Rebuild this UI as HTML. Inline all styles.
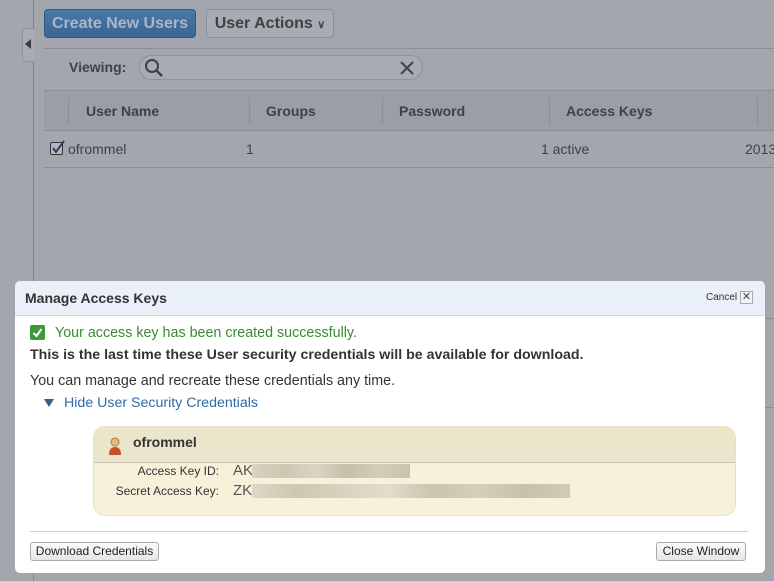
<!DOCTYPE html>
<html><head><style>
body{margin:0;width:774px;height:581px;overflow:hidden;background:#a3a6ad;font-family:"Liberation Sans",Arial,sans-serif;position:relative}
.a{position:absolute}
</style></head><body>
<div class="a" style="left:33px;top:0;width:1px;height:581px;background:#7f838a"></div>
<div class="a" style="left:22px;top:28px;width:12px;height:32px;background:#a8abb2;border:1px solid #92959c;border-right:none;border-radius:4px 0 0 4px"></div>
<div class="a" style="left:25px;top:39px;width:0;height:0;border-top:5px solid transparent;border-bottom:5px solid transparent;border-right:6px solid #3a3d42"></div>
<div class="a" style="left:44px;top:9px;width:152px;height:29px;background:linear-gradient(#4a78a8,#3a6594);border:1px solid #33597f;border-radius:4px;box-sizing:border-box;color:#a9b7c6;font-weight:bold;font-size:16px;line-height:28px;text-align:center">Create New Users</div>
<div class="a" style="left:206px;top:9px;width:128px;height:29px;background:#a8abb1;border:1px solid #8d9096;border-radius:4px;box-sizing:border-box;color:#3e4247;font-weight:bold;font-size:16px;line-height:28px;text-align:center">User Actions <span style="font-size:11px">∨</span></div>
<div class="a" style="left:44px;top:48px;width:730px;height:1px;background:#8a8d93"></div>
<div class="a" style="left:69px;top:59px;font-size:14px;font-weight:bold;color:#3e4247">Viewing:</div>
<div class="a" style="left:139px;top:55px;width:284px;height:25px;border:1px solid #8f9298;border-radius:13px;background:#a8abb1;box-sizing:border-box"></div>
<svg class="a" style="left:143px;top:57px" width="22" height="22"><circle cx="9" cy="9" r="6" fill="none" stroke="#3e4247" stroke-width="2"/><line x1="13" y1="13" x2="19" y2="19" stroke="#3e4247" stroke-width="2.5"/></svg>
<svg class="a" style="left:399px;top:60px" width="16" height="16"><path d="M2 2L14 14M14 2L2 14" stroke="#3e4247" stroke-width="2"/></svg>
<div class="a" style="left:44px;top:90px;width:730px;height:41px;background:#9b9ea4;border-top:1px solid #8a8d93;border-bottom:1px solid #8a8d93;box-sizing:border-box"></div>
<div class="a" style="left:68px;top:98px;width:1px;height:26px;background:#8a8d93"></div>
<div class="a" style="left:249px;top:98px;width:1px;height:26px;background:#8a8d93"></div>
<div class="a" style="left:382px;top:98px;width:1px;height:26px;background:#8a8d93"></div>
<div class="a" style="left:549px;top:98px;width:1px;height:26px;background:#8a8d93"></div>
<div class="a" style="left:757px;top:98px;width:1px;height:26px;background:#8a8d93"></div>
<div class="a" style="left:86px;top:103px;font-size:14px;font-weight:bold;color:#3e4247">User Name</div>
<div class="a" style="left:266px;top:103px;font-size:14px;font-weight:bold;color:#3e4247">Groups</div>
<div class="a" style="left:399px;top:103px;font-size:14px;font-weight:bold;color:#3e4247">Password</div>
<div class="a" style="left:566px;top:103px;font-size:14px;font-weight:bold;color:#3e4247">Access Keys</div>
<div class="a" style="left:50px;top:142px;width:13px;height:13px;border:1px solid #333;background:#b5b8be;border-radius:2px;box-sizing:border-box"></div>
<svg class="a" style="left:50px;top:139px" width="16" height="16"><path d="M3 9L6 13L14 2" fill="none" stroke="#2a3f66" stroke-width="2"/></svg>
<div class="a" style="left:68px;top:141px;font-size:14px;color:#3e4247">ofrommel</div>
<div class="a" style="left:246px;top:141px;font-size:14px;color:#3e4247">1</div>
<div class="a" style="left:541px;top:141px;font-size:14px;color:#3e4247">1 active</div>
<div class="a" style="left:745px;top:141px;font-size:14px;color:#3e4247">2013</div>
<div class="a" style="left:44px;top:167px;width:730px;height:1px;background:#8a8d93"></div>
<div class="a" style="left:764px;top:318px;width:10px;height:1px;background:#8a8d93"></div>
<div class="a" style="left:764px;top:407px;width:10px;height:1px;background:#8a8d93"></div>
<div class="a" style="left:15px;top:281px;width:750px;height:292px;background:#fff;border-radius:5px;overflow:hidden">
 <div class="a" style="left:0;top:0;width:750px;height:34px;background:#eaf0f8;border-bottom:1px solid #cfd6df"></div>
 <div class="a" style="left:10px;top:9px;font-size:14px;font-weight:bold;color:#333">Manage Access Keys</div>
 <div class="a" style="left:691px;top:11px;font-size:10px;color:#333">Cancel</div>
 <div class="a" style="left:725px;top:10px;width:13px;height:13px;border:1px solid #aaa;box-sizing:border-box;background:#f4f4f4;font-size:11px;line-height:11px;text-align:center;color:#444">✕</div>
 <div class="a" style="left:15px;top:44px;width:15px;height:15px;background:#3d9a3a;border-radius:2px"></div>
 <svg class="a" style="left:15px;top:44px" width="15" height="15"><path d="M3.5 8L6.5 11L11.5 4" fill="none" stroke="#fff" stroke-width="2"/></svg>
 <div class="a" style="left:40px;top:44px;font-size:14.3px;color:#3a8a33">Your access key has been created successfully.</div>
 <div class="a" style="left:15px;top:66px;font-size:14.2px;font-weight:bold;color:#333">This is the last time these User security credentials will be available for download.</div>
 <div class="a" style="left:15px;top:92px;font-size:14.3px;color:#333">You can manage and recreate these credentials any time.</div>
 <div class="a" style="left:29px;top:118px;width:0;height:0;border-left:5px solid transparent;border-right:5px solid transparent;border-top:8px solid #2f5f8a"></div>
 <div class="a" style="left:49px;top:114px;font-size:14.2px;color:#2e6aa6">Hide User Security Credentials</div>
 <div class="a" style="left:78px;top:145px;width:643px;height:90px;background:#f8f1da;border:1px solid #e8e0c0;border-radius:12px;box-sizing:border-box;overflow:hidden">
  <div class="a" style="left:0;top:0;width:643px;height:35px;background:#ebe5cc;border-bottom:1px solid #c9c4b0"></div>
 </div>
 <svg class="a" style="left:93px;top:155px" width="14" height="20"><circle cx="7" cy="6" r="4" fill="#e8b88a" stroke="#b47a3a"/><path d="M1 19Q1 11 7 11Q13 11 13 19Z" fill="#c8502a"/></svg>
 <div class="a" style="left:118px;top:153px;font-size:14px;font-weight:bold;color:#333">ofrommel</div>
 <div class="a" style="left:80px;top:183px;width:124px;text-align:right;font-size:12px;color:#333">Access Key ID:</div>
 <div class="a" style="left:80px;top:203px;width:124px;text-align:right;font-size:12px;color:#333">Secret Access Key:</div>
 <div class="a" style="left:218px;top:181px;font-size:15px;color:#555">AK</div>
 <div class="a" style="left:218px;top:201px;font-size:15px;color:#555">ZK</div>
 <div class="a" style="left:237px;top:183px;width:158px;height:14px;background:linear-gradient(90deg,#d8d3c0,#ccc7b2,#dad5c2,#c4bfaa,#d2cdb9,#c8c3ae)"></div>
 <div class="a" style="left:237px;top:203px;width:318px;height:14px;background:linear-gradient(90deg,#ddd8c6,#ccc7b2,#d8d3c0,#e2ddcb,#c9c4af,#d4cfbb,#c6c1ac,#d0cbb7)"></div>
 <div class="a" style="left:15px;top:250px;width:718px;height:1px;background:#ccc"></div>
 <div class="a" style="left:15px;top:261px;width:129px;height:19px;border:1px solid #aaa;border-radius:3px;background:linear-gradient(#fafafa,#e6e6e6);box-sizing:border-box;font-size:12px;line-height:17px;text-align:center;color:#222">Download Credentials</div>
 <div class="a" style="left:641px;top:261px;width:90px;height:19px;border:1px solid #aaa;border-radius:3px;background:linear-gradient(#fafafa,#e6e6e6);box-sizing:border-box;font-size:12px;line-height:17px;text-align:center;color:#222">Close Window</div>
</div>
</body></html>
